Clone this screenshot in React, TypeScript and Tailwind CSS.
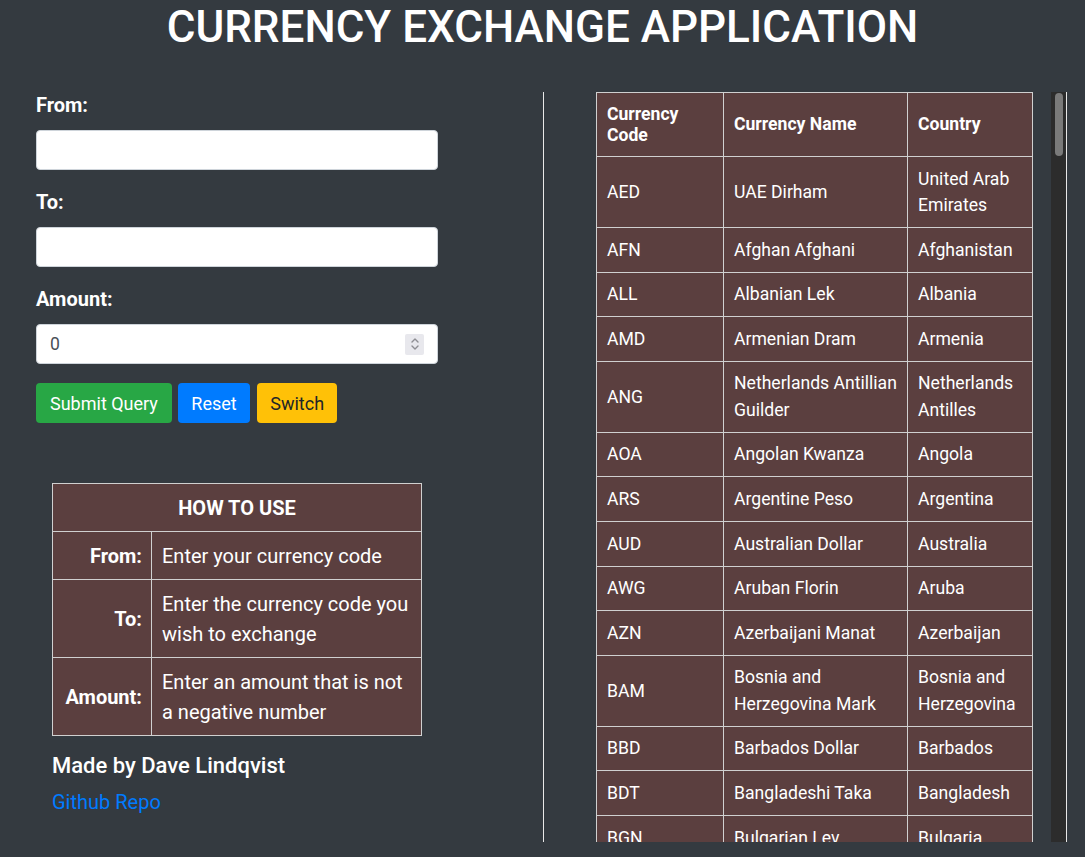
import React from "react";

type Row = { code: string; name: string; country: string };

const rows: Row[] = [
  { code: "AED", name: "UAE Dirham", country: "United Arab\nEmirates" },
  { code: "AFN", name: "Afghan Afghani", country: "Afghanistan" },
  { code: "ALL", name: "Albanian Lek", country: "Albania" },
  { code: "AMD", name: "Armenian Dram", country: "Armenia" },
  { code: "ANG", name: "Netherlands Antillian\nGuilder", country: "Netherlands\nAntilles" },
  { code: "AOA", name: "Angolan Kwanza", country: "Angola" },
  { code: "ARS", name: "Argentine Peso", country: "Argentina" },
  { code: "AUD", name: "Australian Dollar", country: "Australia" },
  { code: "AWG", name: "Aruban Florin", country: "Aruba" },
  { code: "AZN", name: "Azerbaijani Manat", country: "Azerbaijan" },
  { code: "BAM", name: "Bosnia and\nHerzegovina Mark", country: "Bosnia and\nHerzegovina" },
  { code: "BBD", name: "Barbados Dollar", country: "Barbados" },
  { code: "BDT", name: "Bangladeshi Taka", country: "Bangladesh" },
  { code: "BGN", name: "Bulgarian Lev", country: "Bulgaria" },
  { code: "BHD", name: "Bahraini Dinar", country: "Bahrain" },
  { code: "BIF", name: "Burundian Franc", country: "Burundi" },
];

function Spinner() {
  return (
    <div className="flex h-[21px] w-[19px] items-center justify-center rounded-[2px] bg-[#e8e8ed]">
      <svg width="10" height="16" viewBox="0 0 10 16" fill="none">
        <path d="M2 6 L5 3 L8 6" stroke="#8e8e93" strokeWidth="1.4" strokeLinecap="round" strokeLinejoin="round" />
        <path d="M2 10 L5 13 L8 10" stroke="#8e8e93" strokeWidth="1.4" strokeLinecap="round" strokeLinejoin="round" />
      </svg>
    </div>
  );
}

export default function App() {
  const cell = "border border-[#d0d0d0] px-[10px] py-[8.6px] align-middle whitespace-pre-line";
  const hcell = "border border-[#d0d0d0] px-[10px] py-[10.5px] text-left align-middle font-bold leading-[21px] whitespace-pre-line";
  const tcell = "border border-[#d0d0d0] px-[9px] py-[8.5px] align-middle whitespace-pre-line";
  const label = "mb-[10px] pt-[2px] text-[20px] font-bold leading-[30px]";
  const inputCls =
    "mb-[15px] block h-[40px] w-full rounded-[4px] border border-[#ced4da] bg-white px-[13px] text-[17.6px] text-[#495057] outline-none";
  return (
    <div className="min-h-screen bg-[#343a40] font-['Roboto',_'Liberation_Sans',_sans-serif] text-white">
      <h1 className="pt-[3px] text-center text-[44px] font-medium leading-[48px]">CURRENCY EXCHANGE APPLICATION</h1>
      <div className="mt-[37px] flex">
        <div className="w-[543px] shrink-0 pl-[36px]">
          <div className="w-[402px]">
            <div className={label}>From:</div>
            <input className={inputCls} defaultValue="" />
            <div className={label}>To:</div>
            <input className={inputCls} defaultValue="" />
            <div className={label}>Amount:</div>
            <div className="flex h-[40px] w-full items-center rounded-[4px] border border-[#ced4da] bg-white pl-[13px] pr-[13px]">
              <input
                className="min-w-0 flex-1 bg-transparent text-[17.6px] text-[#495057] outline-none"
                defaultValue="0"
              />
              <Spinner />
            </div>
            <div className="mt-[19px] flex">
              <button className="h-[40px] rounded-[4px] bg-[#28a745] px-[14px] text-[18px] text-white">Submit Query</button>
              <button className="ml-[6px] h-[40px] rounded-[4px] bg-[#007bff] px-[13.5px] text-[18px] text-white">Reset</button>
              <button className="ml-[7px] h-[40px] rounded-[4px] bg-[#ffc107] px-[13px] text-[18px] text-[#212529]">Switch</button>
            </div>
          </div>

          <div className="ml-[16px] mt-[60px]">
            <table className="w-[370px] table-fixed border-collapse bg-[#5b3f3f] text-[20px] leading-[30px]">
              <colgroup>
                <col className="w-[99px]" />
                <col />
              </colgroup>
              <thead>
                <tr>
                  <th colSpan={2} className={`${tcell} text-center font-bold`}>HOW TO USE</th>
                </tr>
              </thead>
              <tbody>
                <tr>
                  <td className={`${tcell} text-right font-bold`}>From:</td>
                  <td className={`${tcell} pl-[10px]`}>Enter your currency code</td>
                </tr>
                <tr>
                  <td className={`${tcell} text-right font-bold`}>To:</td>
                  <td className={`${tcell} pl-[10px]`}>{"Enter the currency code you\nwish to exchange"}</td>
                </tr>
                <tr>
                  <td className={`${tcell} text-right font-bold`}>Amount:</td>
                  <td className={`${tcell} pl-[10px]`}>{"Enter an amount that is not\na negative number"}</td>
                </tr>
              </tbody>
            </table>
            <div className="mt-[17px] text-[22px] font-medium leading-[26.4px]">Made by Dave Lindqvist</div>
            <a className="mt-[8px] block text-[20px] leading-[30px] text-[#007bff]" href="#">Github Repo</a>
          </div>
        </div>

        <div className="mt-[4px] flex h-[750px] w-[524px] shrink-0 border-l border-r border-[#e8e8e8]">
          <div className="min-w-0 flex-1 overflow-hidden pl-[52px]">
            <table className="w-[437px] table-fixed border-collapse bg-[#5b3f3f] text-[17.6px] leading-[26.4px]">
              <colgroup>
                <col className="w-[127px]" />
                <col className="w-[184px]" />
                <col />
              </colgroup>
              <thead>
                <tr>
                  <th className={hcell}>{"Currency\nCode"}</th>
                  <th className={hcell}>Currency Name</th>
                  <th className={hcell}>Country</th>
                </tr>
              </thead>
              <tbody>
                {rows.map((r) => (
                  <tr key={r.code}>
                    <td className={cell}>{r.code}</td>
                    <td className={cell}>{r.name}</td>
                    <td className={cell}>{r.country}</td>
                  </tr>
                ))}
              </tbody>
            </table>
          </div>
          <div className="w-[15px] shrink-0 bg-[#2c2c2c] px-[4px] pt-[1px]">
            <div className="h-[63px] w-[8px] rounded-full bg-[#7a7a7a]" />
          </div>
        </div>
      </div>
    </div>
  );
}
